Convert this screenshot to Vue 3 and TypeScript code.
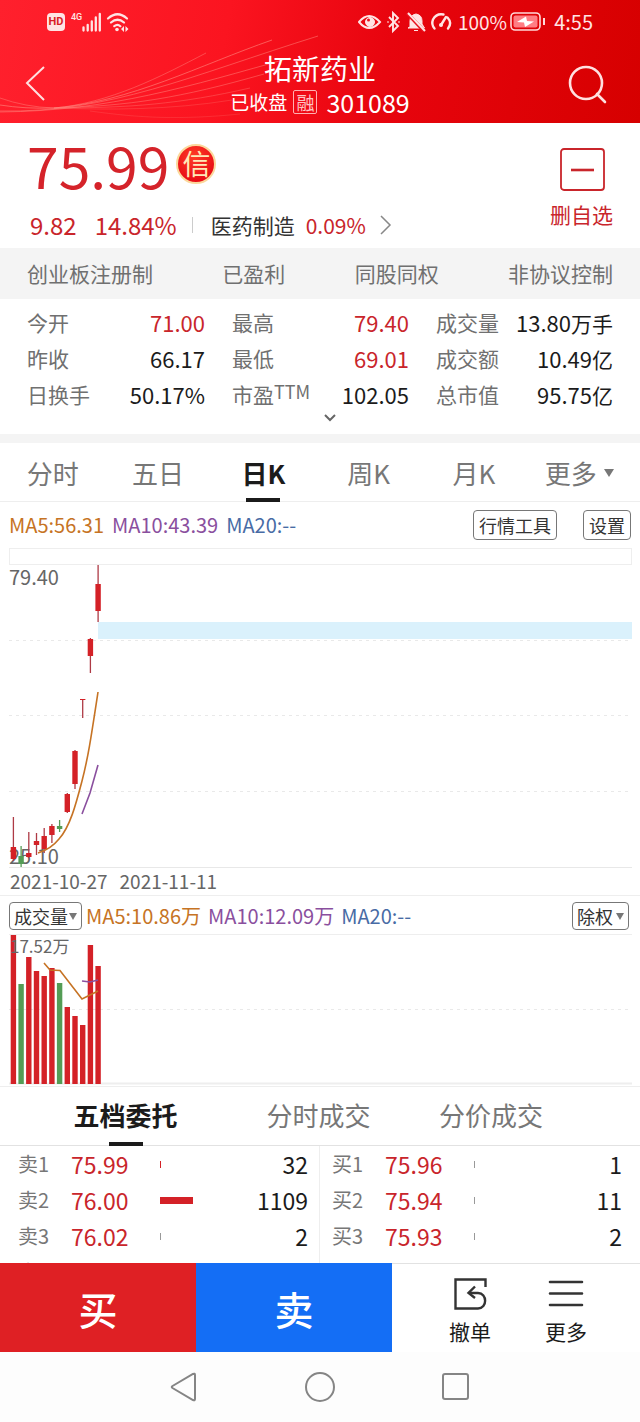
<script setup lang="ts">
import { ref } from 'vue'

interface Candle { high: number; low: number; top: number; bottom: number; up: boolean; volumeTop: number }
interface Quote { label: string; price: string; volume: string; bar: number; hot?: boolean }
interface Stat { label: string; sup?: string; value: string; unit?: string; red?: boolean }

const tags = ['创业板注册制', '已盈利', '同股同权', '非协议控制']

const stats: Stat[][] = [
  [
    { label: '今开', value: '71.00', red: true },
    { label: '昨收', value: '66.17' },
    { label: '日换手', value: '50.17%' },
  ],
  [
    { label: '最高', value: '79.40', red: true },
    { label: '最低', value: '69.01', red: true },
    { label: '市盈', sup: 'TTM', value: '102.05' },
  ],
  [
    { label: '成交量', value: '13.80', unit: '万手' },
    { label: '成交额', value: '10.49', unit: '亿' },
    { label: '总市值', value: '95.75', unit: '亿' },
  ],
]

const periods = ['分时', '五日', '日K', '周K', '月K', '更多']
const period = ref('日K')
const panels = ['五档委托', '分时成交', '分价成交']
const panel = ref('五档委托')
const indicator = ref('成交量')
const adjust = ref('除权')

const candles: Candle[] = [
  { high: 252, low: 296, top: 282, bottom: 294, up: true, volumeTop: 1 },
  { high: 281, low: 302, top: 291, bottom: 299, up: false, volumeTop: 50 },
  { high: 267, low: 293, top: 288, bottom: 292, up: true, volumeTop: 23 },
  { high: 268, low: 290, top: 276, bottom: 280, up: true, volumeTop: 37 },
  { high: 263, low: 288, top: 271, bottom: 284, up: true, volumeTop: 42 },
  { high: 259, low: 278, top: 261, bottom: 270, up: true, volumeTop: 34 },
  { high: 255, low: 267, top: 261, bottom: 264, up: false, volumeTop: 49 },
  { high: 228, low: 248, top: 229, bottom: 247, up: true, volumeTop: 73 },
  { high: 185, low: 224, top: 186, bottom: 219, up: true, volumeTop: 82 },
  { high: 134, low: 153, top: 134, bottom: 135, up: true, volumeTop: 91 },
  { high: 73, low: 108, top: 74, bottom: 91, up: true, volumeTop: 11 },
  { high: 0, low: 57, top: 19, bottom: 46, up: true, volumeTop: 32 },
]
const cx = (i: number) => 13.4 + i * 7.7
const tone = (c: Candle) => (c.up ? '#d42127' : '#549c55')

const asks: Quote[] = [
  { label: '卖1', price: '75.99', volume: '32', bar: 1, hot: true },
  { label: '卖2', price: '76.00', volume: '1109', bar: 33, hot: true },
  { label: '卖3', price: '76.02', volume: '2', bar: 1 },
  { label: '卖4', price: '76.05', volume: '4', bar: 0 },
]
const bids: Quote[] = [
  { label: '买1', price: '75.96', volume: '1', bar: 1 },
  { label: '买2', price: '75.94', volume: '11', bar: 1 },
  { label: '买3', price: '75.93', volume: '2', bar: 1 },
  { label: '买4', price: '75.90', volume: '4', bar: 0 },
]
const books = [
  { name: '卖盘', side: 'asks', rows: asks },
  { name: '买盘', side: 'bids', rows: bids },
]
</script>

<template>
  <div class="app">
    <header class="header">
      <svg class="waves" viewBox="0 0 640 123" preserveAspectRatio="none" fill="none" stroke="#ff8a80" aria-hidden="true">
        <path d="M0 98Q25 107 54 108C110 103 160 77 206 53" stroke-opacity=".45" />
        <path d="M0 105Q25 109 54 108C130 102 200 65 272 40" stroke-opacity=".6" />
        <path d="M0 111C110 113 190 76 318 36" stroke-opacity=".5" />
        <path d="M0 112C110 111 190 86 290 58" stroke-opacity=".5" />
        <path d="M54 108C130 106 180 98 264 74" stroke-opacity=".45" />
        <path d="M54 108C130 108 180 104 250 88" stroke-opacity=".35" />
        <path d="M54 108C110 110 170 110 232 100" stroke-opacity=".25" />
        <path d="M90 111C140 118 180 120 240 114" stroke-opacity=".2" />
      </svg>
      <div class="status">
        <div class="status-side">
          <span class="hd">HD</span>
          <span class="net">4G</span>
          <svg width="48" height="24" viewBox="35 0 48 24" aria-hidden="true">
            <path d="M36.500 17.500v3M40.700 15v5.500M44.800 11.500v9M48.800 7.500v13M52.800 4v16.500" stroke="#ffe4e4" stroke-width="2.300" stroke-linecap="round" />
            <path d="M61 8.500q9.500-8.500 19 0M64 12.500q6.500-5.500 13 0M67.300 16.200q3.200-2.700 6 0" fill="none" stroke="#ffe4e4" stroke-width="2.200" stroke-linecap="round" />
            <circle cx="70" cy="19.500" r="1.800" fill="#ffe4e4" />
            <path d="M77 16v6l-3-3zM78.500 16v6l3-3z" fill="#ffe4e4" />
          </svg>
        </div>
        <div class="status-side">
          <svg width="97" height="24" viewBox="0 0 97 24" fill="none" stroke="#ffe4e4" aria-hidden="true">
            <path d="M1 12q10-12 21 0-11 12-21 0z" stroke-width="2" />
            <circle cx="12" cy="12" r="4.500" fill="#ffe4e4" /><circle cx="10.500" cy="10" r="1.500" fill="#e8101c" stroke="none" />
            <path d="M31 7l9 9-5 5V3l5 5-9 9M29.500 12h1M40.500 12h1" stroke-width="1.900" />
            <path d="M52 17V11q0-6 6-7 6 1 6 7v3l2.500 4H50zM56 20.500h4" fill="#ffe4e4" stroke-width="1" />
            <path d="M49 3l17 18" stroke="#e8101c" stroke-width="3.500" /><path d="M50 3l17 18" stroke-width="2" />
            <path d="M76.500 18.500Q73 14.500 75 9.500q3.500-6.500 10.500-5M89.500 7.500q5 5.500 .5 11M83 15l5-8" stroke-width="2.400" stroke-linecap="round" />
            <circle cx="83" cy="15" r="2" fill="#ffe4e4" stroke="none" />
          </svg>
          <span class="battery-text">100%</span>
          <svg width="36" height="20" viewBox="0 0 36 20" aria-hidden="true">
            <rect x="1" y="1" width="29" height="17" rx="4" fill="none" stroke="#ffd9d9" stroke-width="1.600" />
            <rect x="3.500" y="3.500" width="24" height="12" rx="2" fill="#ff7d84" />
            <path d="M16 4.500L7 10l7 .5 1 4.500 9-5.500-7-.5z" fill="#fff" />
            <path d="M34 6v7" stroke="#ffd9d9" stroke-width="2" />
          </svg>
          <span class="clock">4:55</span>
        </div>
      </div>
      <div class="title-bar">
        <button class="icon-btn" aria-label="返回">
          <svg width="22" height="38" viewBox="0 0 22 38"><path d="M20 2L3 18l17 17" fill="none" stroke="#ffe0e0" stroke-width="2" /></svg>
        </button>
        <div class="title">
          <h1>拓新药业</h1>
          <p><span>已收盘</span><span class="margin-tag">融</span><span class="code">301089</span></p>
        </div>
        <button class="icon-btn" aria-label="搜索">
          <svg width="40" height="40" viewBox="0 0 40 40" fill="none" stroke="#ffe0e0" stroke-width="2.600" stroke-linecap="round"><circle cx="18" cy="19" r="16" /><path d="M29 30l8 8" /></svg>
        </button>
      </div>
    </header>

    <section class="quote">
      <div>
        <div class="price-line">
          <strong class="price">75.99</strong>
          <span class="credit">信</span>
        </div>
        <div class="change-line">
          <span class="change">9.82</span><span class="change pct">14.84%</span>
          <i class="bar"></i>
          <a href="#" class="industry">医药制造<b>0.09%</b>
            <svg width="12" height="20" viewBox="0 0 12 20"><path d="M1 1l9 9-9 9" fill="none" stroke="#888" stroke-width="1.500" /></svg>
          </a>
        </div>
      </div>
      <button class="watch">
        <svg width="46" height="44" viewBox="0 0 46 44" fill="none" stroke="#c9252b"><rect x="2" y="1" width="43" height="41" rx="3" stroke-width="1.800" /><path d="M12 22h23" stroke-width="2.600" /></svg>
        删自选
      </button>
    </section>

    <ul class="tags"><li v-for="t in tags" :key="t">{{ t }}</li></ul>

    <section class="stats">
      <dl v-for="(col, c) in stats" :key="c">
        <div v-for="s in col" :key="s.label">
          <dt>{{ s.label }}<sup v-if="s.sup">{{ s.sup }}</sup></dt>
          <dd :class="{ red: s.red }">{{ s.value }}<small v-if="s.unit">{{ s.unit }}</small></dd>
        </div>
      </dl>
    </section>
    <button class="expand" aria-label="展开">
      <svg width="14" height="10" viewBox="0 0 14 10"><path d="M2 2l5 5 5-5" fill="none" stroke="#666" stroke-width="2" /></svg>
    </button>

    <nav class="periods">
      <button v-for="p in periods" :key="p" :class="{ active: p === period }" @click="period = p">
        {{ p }}<svg v-if="p === '更多'" width="10" height="8" viewBox="0 0 10 8"><path d="M0 0h10L5 8z" fill="#777" /></svg>
      </button>
    </nav>

    <section class="chart">
      <div class="tools">
        <span class="ma5">MA5:56.31</span><span class="ma10">MA10:43.39</span><span class="ma20">MA20:--</span>
        <button class="first">行情工具</button><button>设置</button>
      </div>
      <div class="strip"></div>
      <svg class="plot" viewBox="0 0 640 303" role="img" aria-label="日K线">
        <path d="M9 75.500H632M9 150.500H632M9 226.500H632" class="dash" />
        <text x="9" y="20" class="scale">79.40</text>
        <text x="9" y="299" class="scale">25.10</text>
        <rect x="98" y="57" width="534" height="17" fill="#daf1fc" />
        <g v-for="(c, i) in candles" :key="i">
          <path :d="`M${cx(i)} ${c.high}V${c.low}`" :stroke="c.up ? '#ae3a45' : '#549c55'" stroke-width="1.300" />
          <rect :x="cx(i) - 2.7" :y="c.top" width="5.400" :height="c.bottom - c.top" :fill="tone(c)" />
        </g>
        <path d="M38 288Q51 284 59 274C70 262 76 239 82 216S91 173 98 127" fill="none" stroke="#c67324" stroke-width="1.600" />
        <path d="M82 249L90 228 98 200" fill="none" stroke="#8a4f9e" stroke-width="1.600" />
        <path d="M9 302.500H632" stroke="#e8e8e8" />
      </svg>
      <div class="dates"><time>2021-10-27</time><time>2021-11-11</time></div>
      <div class="volume-tools">
        <label class="pick">
          <select v-model="indicator" aria-label="指标"><option>成交量</option></select>
          <svg width="8" height="7" viewBox="0 0 8 7"><path d="M0 0h8L4 7z" fill="#777" /></svg>
        </label>
        <span class="ma5">MA5:10.86万</span><span class="ma10">MA10:12.09万</span><span class="ma20">MA20:--</span>
        <label class="pick adjust">
          <select v-model="adjust" aria-label="复权"><option>除权</option></select>
          <svg width="8" height="7" viewBox="0 0 8 7"><path d="M0 0h8L4 7z" fill="#777" /></svg>
        </label>
      </div>
      <svg class="plot" viewBox="0 0 640 152" role="img" aria-label="成交量">
        <path d="M9 .5H632" stroke="#eee" />
        <path d="M9 75.500H632" class="dash" />
        <path d="M9 149.500H632" stroke="#eee" stroke-width="2" />
        <rect v-for="(c, i) in candles" :key="i" :x="cx(i) - 2.7" :y="c.volumeTop" width="5.400" :height="150 - c.volumeTop" :fill="tone(c)" />
        <text x="10" y="19" class="scale small">17.52万</text>
        <path d="M44 29L50 36 60 36.500 82 65 90 61 98 57" fill="none" stroke="#c67324" stroke-width="1.600" />
        <path d="M82 47L90 48 98 46" fill="none" stroke="#8a4f9e" stroke-width="1.600" />
      </svg>
    </section>

    <nav class="panels">
      <button v-for="p in panels" :key="p" :class="{ active: p === panel }" @click="panel = p">{{ p }}</button>
    </nav>

    <section class="books">
      <table v-for="b in books" :key="b.side" :class="b.side" :aria-label="b.name">
        <tbody>
          <tr v-for="q in b.rows" :key="q.label">
            <th scope="row">{{ q.label }}</th>
            <td class="p">{{ q.price }}</td>
            <td class="depth"><i :class="{ hot: q.hot }" :style="{ width: q.bar + 'px' }"></i></td>
            <td class="v">{{ q.volume }}</td>
          </tr>
        </tbody>
      </table>
    </section>

    <footer class="trade">
      <button class="buy">买</button>
      <button class="sell">卖</button>
      <div class="actions">
        <button>
          <svg width="36" height="34" viewBox="0 0 36 34" fill="none" stroke="#333" stroke-width="2.400"><path d="M33.500 10V2.500H3.500v29H26c9.500 0 9.500-15.500 0-15.500H18" /><path d="M23 9.500l-6.500 6.500 6.500 5" /></svg>
          撤单
        </button>
        <button>
          <svg width="36" height="34" viewBox="0 0 36 34" stroke="#333" stroke-width="2.600" stroke-linecap="round"><path d="M2 5h32M2 16.500h32M2 28h32" /></svg>
          更多
        </button>
      </div>
    </footer>

    <nav class="system">
      <button aria-label="后退"><svg width="30" height="32" viewBox="0 0 30 32"><path d="M3.500 15L24 3q2-1 2 1v24q0 2-2 1L3.500 17q-1.500-1 0-2z" fill="none" stroke="#858585" stroke-width="2" /></svg></button>
      <button aria-label="主页"><svg width="32" height="32" viewBox="0 0 32 32"><circle cx="16" cy="16" r="14" fill="none" stroke="#858585" stroke-width="2" /></svg></button>
      <button aria-label="最近任务"><svg width="30" height="30" viewBox="0 0 30 30"><rect x="2" y="2" width="25" height="25" rx="2" fill="none" stroke="#858585" stroke-width="2" /></svg></button>
    </nav>
  </div>
</template>

<style>
body { margin: 0; background: #fdfdfd; }
</style>

<style scoped>
.app { font-family: "Noto Sans CJK SC", "Noto Sans", sans-serif; color: #1b1b1b; background: #fff; font-size: 21px; line-height: 36px; }
.app * { box-sizing: border-box; }
svg { display: block; flex: none; }
button, select { font: inherit; color: inherit; background: none; border: 0; padding: 0; margin: 0; cursor: pointer; }
h1, p, ul, dl, dd { margin: 0; padding: 0; font-weight: 400; }

.header { position: relative; height: 123px; color: #fff; background: linear-gradient(100deg, #ff202d 0%, #fb1420 35%, #e8040e 60%, #d60000 100%); }
.waves { position: absolute; inset: 0; width: 100%; height: 100%; }
.status { position: relative; display: flex; justify-content: space-between; height: 44px; padding: 0 47px; color: #ffe4e4; }
.status-side { display: flex; align-items: center; }
.hd { width: 18px; height: 18px; border-radius: 4px; background: #ffe4e4; color: #d91c26; font: 700 11px/18px Roboto, sans-serif; text-align: center; }
.net { width: 17px; height: 24px; padding-left: 6px; font: 500 9px/14px Roboto, sans-serif; }
.battery-text { font-size: 19px; margin: 0 3px; }
.clock { font-size: 20px; margin-left: 8px; }
.title-bar { position: relative; display: flex; justify-content: space-between; align-items: center; height: 79px; padding: 0 32px 0 24px; }
.title { text-align: center; margin-left: 26px; }
.title h1 { font-size: 28px; line-height: 36px; }
.title p { display: flex; align-items: center; justify-content: center; height: 32px; font-size: 19px; }
.margin-tag { border: 1px solid #ffb0b0; color: #ffc4c4; border-radius: 2px; width: 24px; height: 24px; line-height: 22px; font-size: 18px; margin: 0 9px 0 6px; }
.code { font-size: 25px; line-height: 32px; }

.quote { display: flex; justify-content: space-between; height: 125px; padding: 0 27px; }
.price-line { display: flex; align-items: flex-start; height: 82px; }
.price { font-size: 57px; line-height: 82px; font-weight: 400; color: #d5232a; }
.credit { width: 40px; height: 40px; margin: 21px 0 0 7px; border-radius: 50%; border: 2px solid #fbd89c; background: radial-gradient(circle at 45% 30%, #ff3b25, #e80d16 75%); color: #ffe9b8; font: 28px/34px "Noto Sans CJK SC", sans-serif; text-align: center; }
.change-line { display: flex; align-items: center; height: 40px; padding-left: 3px; }
.change { font-size: 24px; color: #c9252b; }
.pct { margin-left: 18px; }
.bar { width: 1px; height: 16px; margin: 0 18px 0 15px; background: #ccc; }
.industry { display: flex; align-items: center; color: #333; text-decoration: none; }
.industry b { font-weight: 400; color: #c9252b; margin: 0 14px 0 11px; }
.watch { display: flex; flex-direction: column; align-items: center; padding-top: 25px; line-height: 44px; color: #c9252b; }

.tags { display: flex; justify-content: space-between; padding: 0 27px; list-style: none; line-height: 51px; background: #f4f4f4; color: #707070; }
.stats { display: grid; grid-template-columns: 178fr 177fr 177fr; column-gap: 27px; padding: 5px 27px 0; line-height: 36px; }
.stats dl > div { display: flex; justify-content: space-between; height: 36px; }
.stats dt { color: #707070; }
.stats sup { font-size: 18px; line-height: 1; vertical-align: 4px; }
.stats dd { font-size: 22px; }
.stats small { font-size: 21px; }
.stats .red { color: #c9252b; }
.expand { display: flex; justify-content: center; width: 100%; height: 31px; padding: 1px 0 0 20px; border-bottom: 9px solid #f4f4f4; }

.periods { display: flex; height: 59px; padding-right: 8px; border-bottom: 1px solid #eee; }
.periods button { flex: 1; position: relative; display: flex; align-items: center; justify-content: center; gap: 7px; padding-top: 2px; font-size: 26px; color: #777; }
.active { position: relative; }
.periods .active, .panels .active { color: #1b1b1b; font-weight: 700; }
.active::after { content: ""; position: absolute; left: 50%; bottom: -1px; width: 34px; height: 4px; margin-left: -17px; background: #1b1b1b; }

.tools, .volume-tools { display: flex; align-items: center; gap: 8px; padding: 0 9px; font-size: 20px; }
.tools { height: 46px; }
.ma5 { color: #c67324; } .ma10 { color: #8a4f9e; } .ma20 { color: #486ba5; }
.tools button { height: 30px; padding: 0 5px; border: 1px solid #777; border-radius: 4px; font-size: 18px; line-height: 28px; color: #333; margin-left: 18px; }
.tools .first { margin-left: auto; }
.strip { height: 17px; margin: 0 8px 0 9px; border: 1px solid #eee; }
.plot { width: 100%; height: auto; overflow: visible; }
.dash { stroke: #e9e9e9; stroke-dasharray: 3 4; }
.scale { font-size: 20px; fill: #666; }
.small { font-size: 17px; }
.dates { display: flex; gap: 12px; padding: 0 10px; height: 27px; line-height: 26px; font-size: 19px; color: #666; }
.volume-tools { height: 39px; padding-top: 2px; border-top: 1px solid #eee; gap: 7px; }
.volume-tools .ma5 { margin-left: -3px; }
.pick { display: inline-flex; align-items: center; height: 28px; padding: 0 4px; gap: 1px; border: 1px solid #777; border-radius: 4px; font-size: 18px; line-height: 26px; color: #333; }
.pick select { appearance: none; outline: 0; }
.adjust { margin: 0 2px 0 auto; gap: 3px; }

.panels { display: grid; grid-template-columns: 193fr 193fr 152fr; height: 60px; padding: 0 73px 0 29px; border-top: 1px solid #eee; border-bottom: 1px solid #e2e2e2; font-size: 26px; }
.panels button { color: #777; padding-bottom: 2px; }

.books { display: grid; grid-template-columns: 1fr 1fr; height: 117px; overflow: hidden; }
table { border-collapse: collapse; table-layout: fixed; width: 100%; height: 144px; font-size: 23px; }
tr { height: 36px; }
th, td { padding: 0; line-height: 36px; text-align: left; }
th { width: 71px; padding-left: 18px; font-size: 20px; font-weight: 400; color: #777; }
.bids th { width: 65px; padding-left: 12px; }
.p { width: 89px; color: #c9252b; }
.depth i { display: block; height: 7px; background: #999; }
.depth .hot { background: #d42127; }
.v { width: 100px; padding-right: 11px; text-align: right; }
.bids .v { padding-right: 18px; }
.asks { border-right: 1px solid #eee; }

.trade { display: grid; grid-template-columns: 196fr 196fr 248fr; height: 89px; }
.buy, .sell { color: #fff; font-size: 39px; font-weight: 500; }
.buy { background: #df2024; } .sell { background: #146ef5; }
.actions { display: flex; padding: 0 26px 0 30px; border-top: 1px solid #e2e2e2; }
.actions button { flex: 1; display: flex; flex-direction: column; align-items: center; padding-top: 13px; line-height: 40px; }
.system { display: flex; justify-content: center; height: 70px; background: #fdfdfd; }
.system button { width: 136px; display: flex; align-items: center; justify-content: center; }
</style>
